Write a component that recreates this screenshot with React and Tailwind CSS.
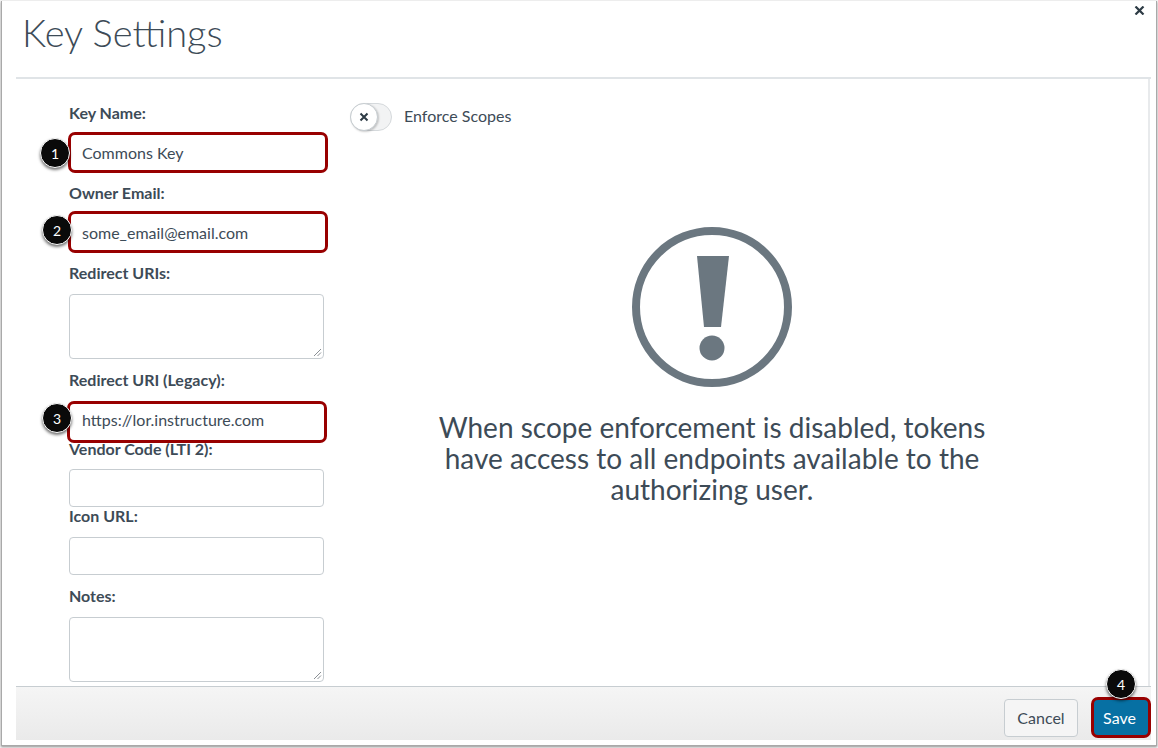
import React from "react";

function Badge({ n, className }) {
  return (
    <div className={"absolute w-[30px] h-[30px] rounded-full bg-[#0a0a0a] border border-white text-white text-[14px] flex items-center justify-center shadow-[0_2px_3px_rgba(0,0,0,0.55)] z-10 " + className}>
      {n}
    </div>
  );
}

function Label({ children, className = "" }) {
  return <div className={"h-[20px] leading-[19px] text-[16px] font-bold text-[#3d4b57] " + className}>{children}</div>;
}

function Plain({ className = "" }) {
  return <div className={"w-[255px] bg-white border border-[#c7cdd1] rounded-[4px] " + className} />;
}

function Area({ className = "" }) {
  return (
    <div className={"relative w-[255px] h-[65px] bg-white border border-[#c7cdd1] rounded-[4px] " + className}>
      <svg className="absolute right-[1px] bottom-[1px]" width="9" height="9" viewBox="0 0 9 9">
        <path d="M1 8 8 1M4.5 8 8 4.5" stroke="#8a8f94" strokeWidth="1" fill="none" />
      </svg>
    </div>
  );
}

function Marked({ value, badge, badgeClass, className = "" }) {
  return (
    <div className={"relative w-[260px] bg-white border-[3px] border-[#980000] rounded-[7px] flex items-center text-[16px] text-[#3d4b57] " + className}>
      {value}
      <Badge n={badge} className={badgeClass} />
    </div>
  );
}

export default function App() {
  return (
    <div className="w-[1158px] h-[748px] bg-[#f4f4f4] pl-[1px] pt-[1px] pr-[1px] pb-[2px] overflow-hidden" style={{ fontFamily: '"Lato","Open Sans",sans-serif' }}>
      <div className="relative w-full h-full bg-white border-l border-r border-b border-[#a9a9a9] shadow-[0_1px_2px_rgba(0,0,0,0.4)] pl-[14px] pr-[5px] flex flex-col">
        <div className="h-[78px] shrink-0 border-b-2 border-[#e0e4e7] pl-[6px] relative">
          <h1 className="text-[38px] leading-[63px] font-light text-[#3d4b57]">Key Settings</h1>
          <svg className="absolute right-[6px] top-[5px]" width="11" height="9" viewBox="0 0 11 9">
            <path d="M1.5 0.5 9.5 8.5M9.5 0.5 1.5 8.5" stroke="#2d3b45" strokeWidth="2.2" />
          </svg>
        </div>
        <div className="relative flex-1 min-h-0 flex overflow-hidden border-r-2 border-[#e8eaec] mr-[1px]">
          <div className="w-[334px] shrink-0 pl-[53px] pt-[24px]">
            <Label>Key Name:</Label>
            <Marked value="Commons Key" badge="1" badgeClass="left-[-31px] top-[3px]" className="-ml-[1px] mt-[9px] h-[41px] pl-[11px]" />
            <Label className="mt-[10px]">Owner Email:</Label>
            <Marked value="some_email@email.com" badge="2" badgeClass="left-[-29px] top-[1px]" className="-ml-[1px] mt-[8px] h-[42px] pl-[11px] pt-[1px]" />
            <Label className="mt-[10px]">Redirect URIs:</Label>
            <Area className="mt-[11px]" />
            <Label className="mt-[11px]">Redirect URI (Legacy):</Label>
            <Marked value="https://lor.instructure.com" badge="3" badgeClass="left-[-28px] top-[-1px]" className="-ml-[2px] mt-[11px] h-[42px] pl-[12px] pb-[5px]" />
            <Label className="-mt-[4px]">Vendor Code (LTI 2):</Label>
            <Plain className="h-[38px] mt-[10px]" />
            <Label className="-mt-[1px]">Icon URL:</Label>
            <Plain className="h-[38px] mt-[11px]" />
            <Label className="mt-[11px]">Notes:</Label>
            <Area className="mt-[11px]" />
          </div>
          <div className="flex-1 min-w-0 pt-[24px]">
            <div className="flex items-center h-[28px]">
              <div className="relative w-[42px] h-[28px] rounded-full bg-[#f2f3f4] border border-[#d5d9dc] shrink-0">
                <div className="absolute left-[-1px] top-[-1px] w-[28px] h-[28px] rounded-full bg-white border border-[#c7cdd1] shadow-[1px_1px_2px_rgba(0,0,0,0.2)] flex items-center justify-center">
                  <svg width="10" height="10" viewBox="0 0 10 10">
                    <path d="M1.5 1.5 8.5 8.5M8.5 1.5 1.5 8.5" stroke="#2d3b45" strokeWidth="2" />
                  </svg>
                </div>
              </div>
              <span className="ml-[12px] pb-[2px] text-[16px] text-[#3d4b57]">Enforce Scopes</span>
            </div>
            <div className="w-[724px] flex flex-col items-center mt-[95px]">
              <svg width="162" height="162" viewBox="0 0 162 162">
                <circle cx="81" cy="81" r="76" fill="none" stroke="#6b7780" strokeWidth="8" />
                <path d="M66 30H98L90 101H73Z" fill="#6b7780" />
                <circle cx="81" cy="122" r="12.5" fill="#6b7780" />
              </svg>
              <p className="mt-[24px] w-[570px] text-center text-[28px] leading-[31px] text-[#3d4b57]">
                When scope enforcement is disabled, tokens have access to all endpoints available to the authorizing user.
              </p>
            </div>
          </div>
        </div>
        <div className="h-[54px] shrink-0 border-t border-[#c7cdd1] bg-gradient-to-b from-[#f5f5f5] to-[#eaeaea] flex justify-end items-start pt-[12px] mb-[5px]">
          <div className="w-[74px] h-[38px] rounded-[4px] border border-[#c7cdd1] bg-[#f5f5f5] text-[#3d4b57] text-[16px] flex items-center justify-center">Cancel</div>
          <div className="relative ml-[13px] -mt-[2px] w-[60px] h-[41px] rounded-[7px] bg-[#0770a3] border-[3px] border-[#980000] pr-[3px] text-white text-[16px] flex items-center justify-center">
            Save
            <Badge n="4" className="left-[12px] top-[-31px]" />
          </div>
        </div>
      </div>
    </div>
  );
}
